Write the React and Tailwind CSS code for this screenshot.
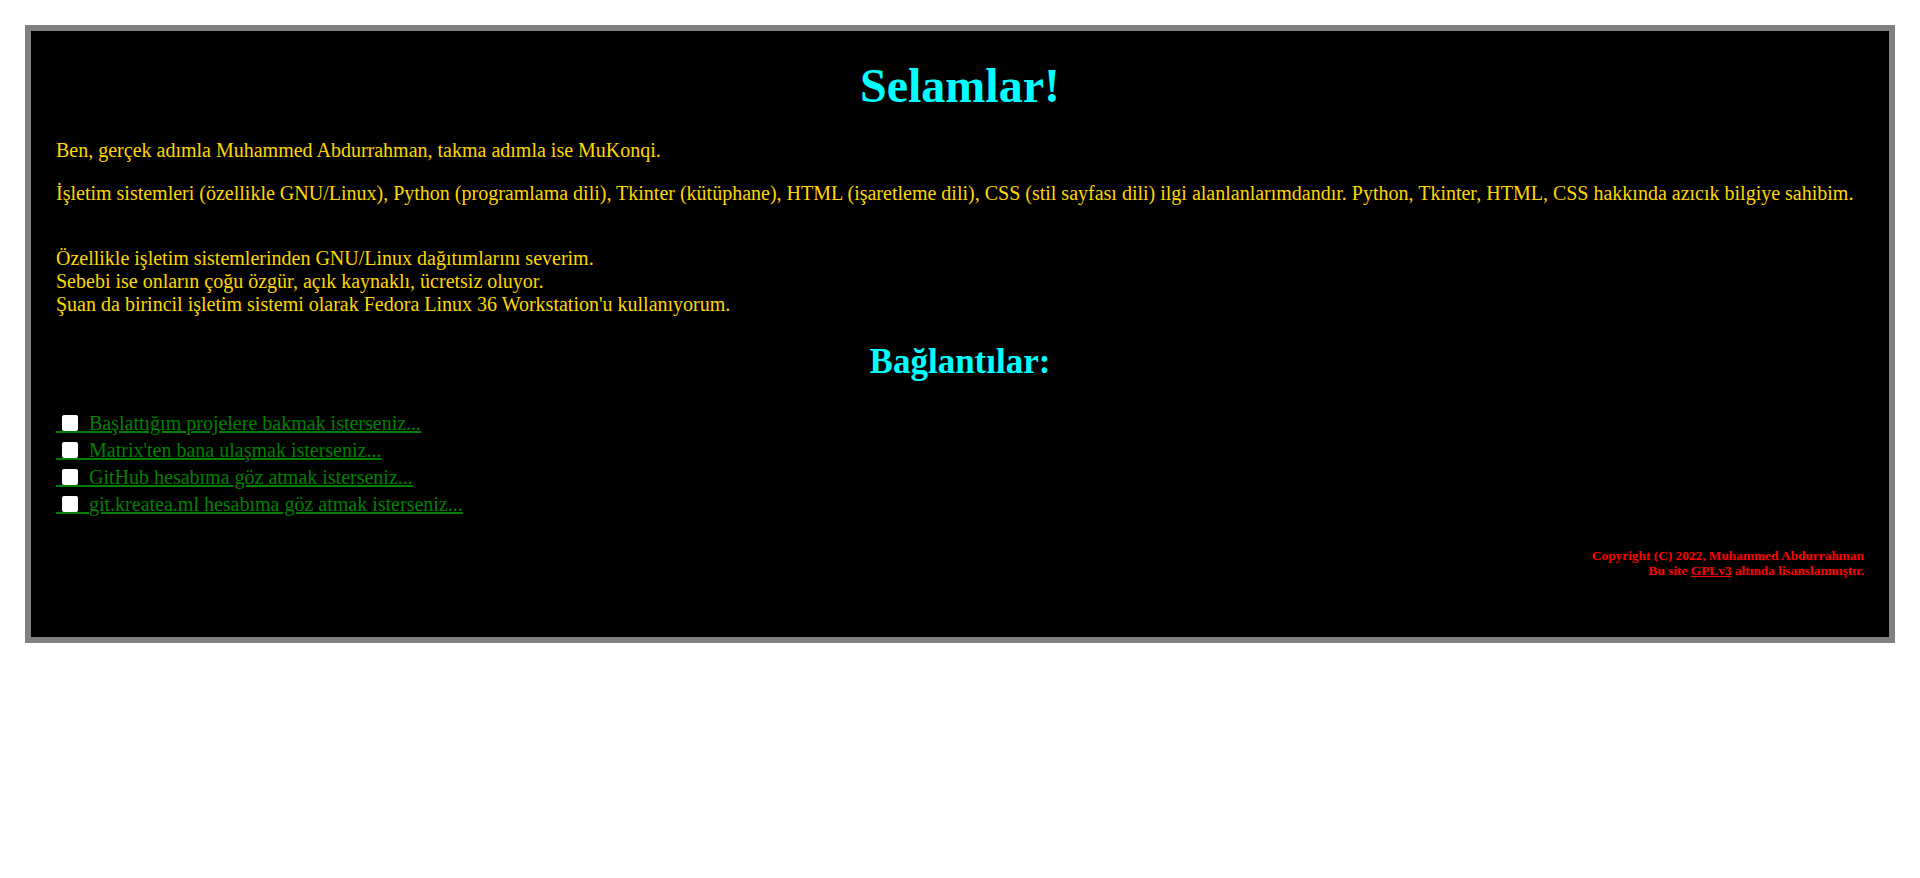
import React from "react";

const links = [
  "Başlattığım projelere bakmak isterseniz...",
  "Matrix'ten bana ulaşmak isterseniz...",
  "GitHub hesabıma göz atmak isterseniz...",
  "git.kreatea.ml hesabıma göz atmak isterseniz...",
];

const LinkRow = ({ label }) => {
  return (
    <div className="h-[27px] pt-[4px] leading-[23px]">
      <a href="#" className="text-[#008000] underline decoration-[#008000]">
        {/* checkbox takes no width, the nbsp run under it keeps the underline going */}
        <span className="inline-block w-[16px] h-[16px] ml-[6px] -mr-[22px] bg-white rounded-[2px] align-[-1px]" />
        <span className="[word-spacing:0.5px]">
          {"\u00a0\u00a0\u00a0\u00a0\u00a0\u00a0"}
        </span>
        {label}
      </a>
    </div>
  );
};

export default function App() {
  return (
    <div className="min-h-screen bg-white pt-[25px] px-[25px] font-['Liberation_Serif',serif]">
      <div className="border-[6px] border-[#808080] bg-black px-[25px] pt-[27px] pb-[58px] text-[20px] leading-[23px] text-[#ffd700]">
        <h1 className="text-center text-[48px] leading-[55px] font-bold text-[#00ffff]">
          Selamlar!
        </h1>

        <p className="mt-[26px]">
          Ben, gerçek adımla Muhammed Abdurrahman, takma adımla ise MuKonqi.
        </p>
        <p className="mt-[20px]">
          İşletim sistemleri (özellikle GNU/Linux), Python (programlama dili), Tkinter (kütüphane), HTML (işaretleme dili), CSS (stil sayfası dili) ilgi alanlanlarımdandır. Python, Tkinter, HTML, CSS hakkında azıcık bilgiye sahibim.
        </p>
        <p className="mt-[42px]">
          Özellikle işletim sistemlerinden GNU/Linux dağıtımlarını severim.
          <br />
          Sebebi ise onların çoğu özgür, açık kaynaklı, ücretsiz oluyor.
          <br />
          Şuan da birincil işletim sistemi olarak Fedora Linux 36 Workstation'u kullanıyorum.
        </p>

        <h2 className="mt-[26px] text-center text-[35px] leading-[40px] font-bold text-[#00ffff]">
          Bağlantılar:
        </h2>

        <div className="mt-[26px]">
          {links.map((label) => (
            <LinkRow key={label} label={label} />
          ))}
        </div>

        <div className="mt-[32px] text-right text-[13.33px] leading-[15.3px] font-bold text-[#ff0000]">
          Copyright (C) 2022, Muhammed Abdurrahman
          <br />
          Bu site{" "}
          <a href="#" className="underline">
            GPLv3
          </a>{" "}
          altında lisanslanmıştır.
        </div>
      </div>
    </div>
  );
}
